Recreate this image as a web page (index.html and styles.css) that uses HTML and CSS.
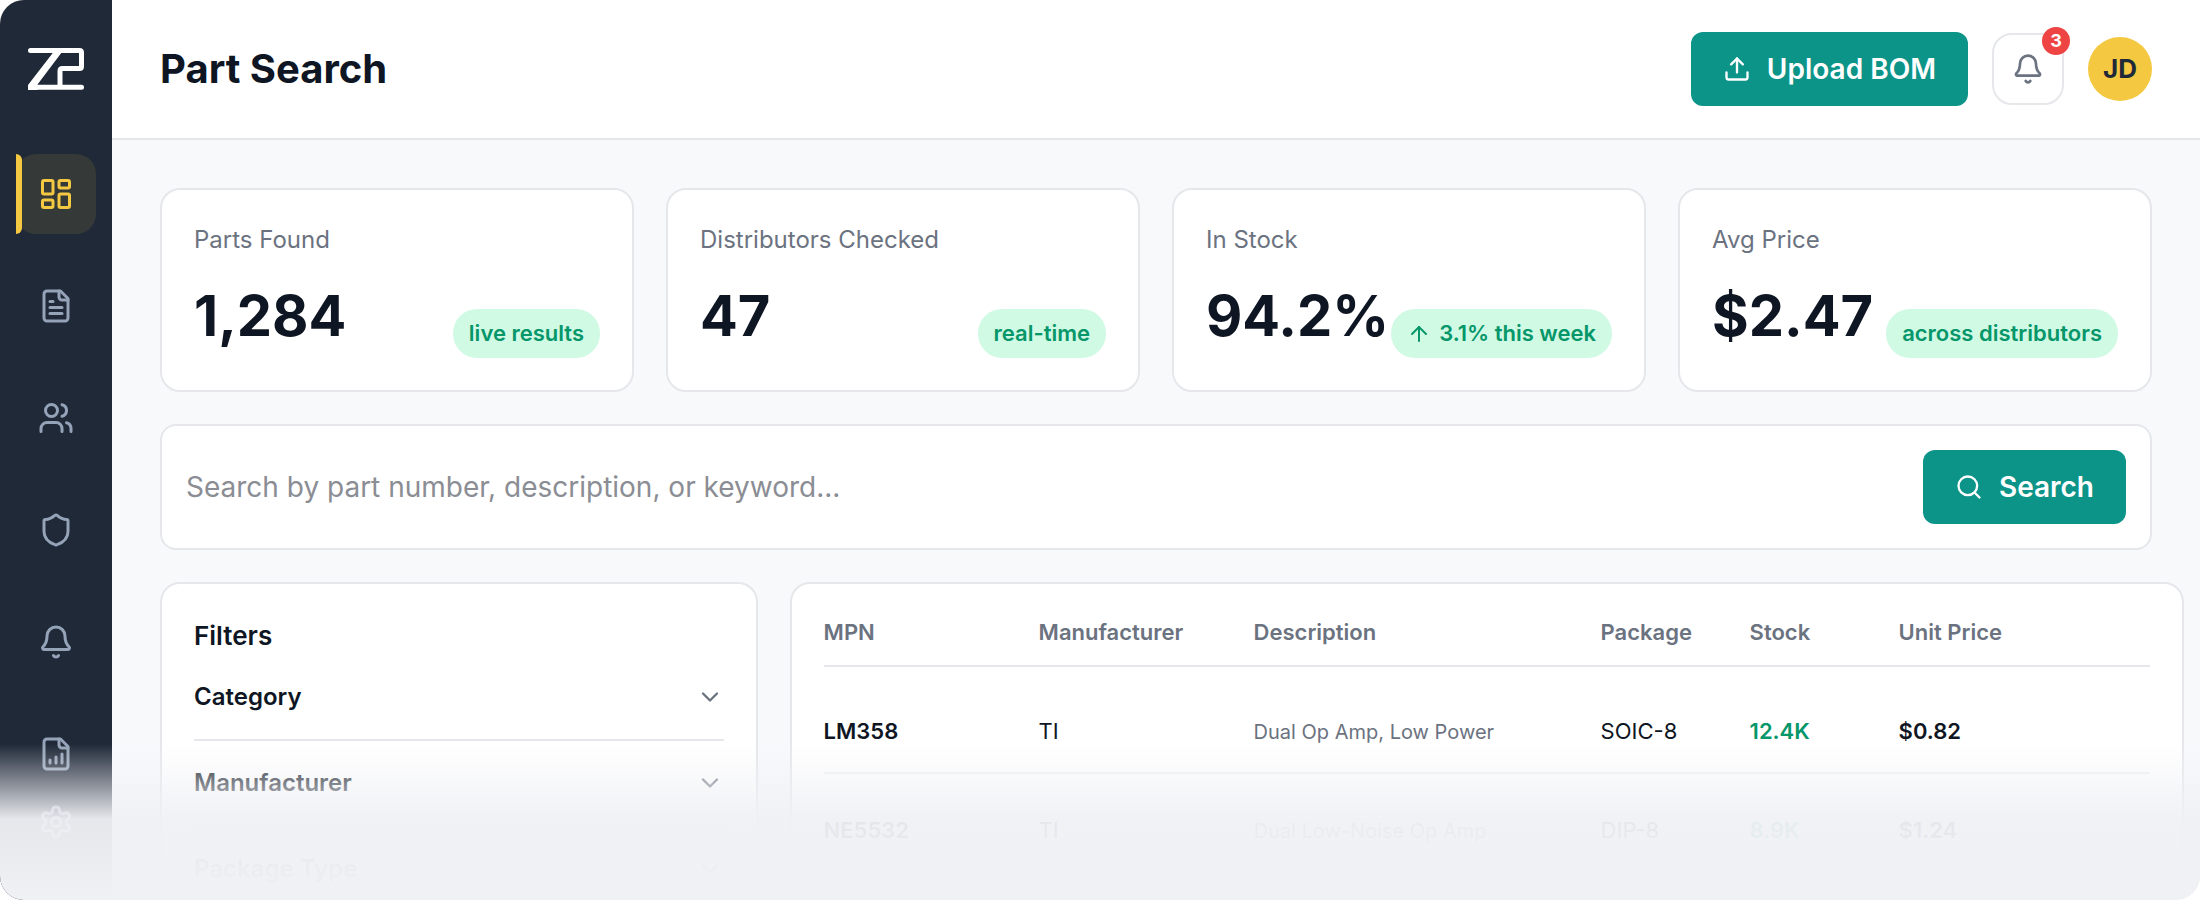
FILE: index.html
```html
<!DOCTYPE html>
<html lang="en">
<head>
  <meta charset="UTF-8">
  <meta name="viewport" content="width=device-width, initial-scale=1.0">
  <title>Part Search</title>
  <link rel="stylesheet" href="styles.css">
</head>
<body>
  <div class="app">
    <aside class="sidebar">
      <a href="#" class="logo" aria-label="Home">
        <svg width="56" height="42" viewBox="0 0 56 42" fill="none" stroke="#fff" stroke-width="5" stroke-linecap="round">
          <path d="M2.5 2.5H51.5Q53.5 2.5 53.5 4.5V18.5Q53.5 20.5 51.5 20.5H34.5Q32 20.5 32 23V38"/>
          <path d="M8 39.2H53.5"/>
          <path d="M25.5 4H34L9.5 36.5V42H0V37Z" fill="#fff" stroke="none"/>
        </svg>
      </a>
      <nav class="nav">
        <a href="#" class="nav-item active" aria-label="Dashboard">
          <svg class="icon" viewBox="0 0 24 24"><rect width="7" height="9" x="3" y="3" rx="1"/><rect width="7" height="5" x="14" y="3" rx="1"/><rect width="7" height="9" x="14" y="12" rx="1"/><rect width="7" height="5" x="3" y="16" rx="1"/></svg>
        </a>
        <a href="#" class="nav-item" aria-label="Documents">
          <svg class="icon" viewBox="0 0 24 24"><path d="M15 2H6a2 2 0 0 0-2 2v16a2 2 0 0 0 2 2h12a2 2 0 0 0 2-2V7Z"/><path d="M14 2v4a2 2 0 0 0 2 2h4"/><path d="M10 9H8"/><path d="M16 13H8"/><path d="M16 17H8"/></svg>
        </a>
        <a href="#" class="nav-item" aria-label="Suppliers">
          <svg class="icon" viewBox="0 0 24 24"><path d="M16 21v-2a4 4 0 0 0-4-4H6a4 4 0 0 0-4 4v2"/><circle cx="9" cy="7" r="4"/><path d="M22 21v-2a4 4 0 0 0-3-3.87"/><path d="M16 3.13a4 4 0 0 1 0 7.75"/></svg>
        </a>
        <a href="#" class="nav-item" aria-label="Compliance">
          <svg class="icon" viewBox="0 0 24 24"><path d="M20 13c0 5-3.5 7.5-7.66 8.95a1 1 0 0 1-.67-.01C7.5 20.5 4 18 4 13V6a1 1 0 0 1 1-1c2 0 4.5-1.2 6.24-2.72a1.17 1.17 0 0 1 1.52 0C14.51 3.81 17 5 19 5a1 1 0 0 1 1 1z"/></svg>
        </a>
        <a href="#" class="nav-item" aria-label="Alerts">
          <svg class="icon" viewBox="0 0 24 24"><path d="M10.268 21a2 2 0 0 0 3.464 0"/><path d="M3.262 15.326A1 1 0 0 0 4 17h16a1 1 0 0 0 .74-1.673C19.41 13.956 18 12.499 18 8A6 6 0 0 0 6 8c0 4.499-1.411 5.956-2.738 7.326"/></svg>
        </a>
        <a href="#" class="nav-item" aria-label="Reports">
          <svg class="icon" viewBox="0 0 24 24"><path d="M15 2H6a2 2 0 0 0-2 2v16a2 2 0 0 0 2 2h12a2 2 0 0 0 2-2V7Z"/><path d="M14 2v4a2 2 0 0 0 2 2h4"/><path d="M8 18v-2"/><path d="M12 18v-4"/><path d="M16 18v-6"/></svg>
        </a>
      </nav>
      <a href="#" class="nav-item" aria-label="Settings">
        <svg class="icon" viewBox="0 0 24 24"><path d="M12.22 2h-.44a2 2 0 0 0-2 2v.18a2 2 0 0 1-1 1.73l-.43.25a2 2 0 0 1-2 0l-.15-.08a2 2 0 0 0-2.73.73l-.22.38a2 2 0 0 0 .73 2.73l.15.1a2 2 0 0 1 1 1.72v.51a2 2 0 0 1-1 1.74l-.15.09a2 2 0 0 0-.73 2.73l.22.38a2 2 0 0 0 2.73.73l.15-.08a2 2 0 0 1 2 0l.43.25a2 2 0 0 1 1 1.73V20a2 2 0 0 0 2 2h.44a2 2 0 0 0 2-2v-.18a2 2 0 0 1 1-1.73l.43-.25a2 2 0 0 1 2 0l.15.08a2 2 0 0 0 2.73-.73l.22-.39a2 2 0 0 0-.73-2.73l-.15-.08a2 2 0 0 1-1-1.74v-.5a2 2 0 0 1 1-1.74l.15-.09a2 2 0 0 0 .73-2.73l-.22-.38a2 2 0 0 0-2.73-.73l-.15.08a2 2 0 0 1-2 0l-.43-.25a2 2 0 0 1-1-1.73V4a2 2 0 0 0-2-2z"/><circle cx="12" cy="12" r="3"/></svg>
      </a>
    </aside>

    <div class="main">
      <header class="header">
        <h1>Part Search</h1>
        <div class="header-actions">
          <button type="button" class="btn">
            <svg class="icon btn-icon" viewBox="0 0 24 24"><path d="M12 3v12"/><path d="m17 8-5-5-5 5"/><path d="M3 15v4a2 2 0 0 0 2 2h14a2 2 0 0 0 2-2v-4"/></svg>
            Upload BOM
          </button>
          <button type="button" class="bell-btn" aria-label="Notifications">
            <svg class="icon" viewBox="0 0 24 24"><path d="M10.268 21a2 2 0 0 0 3.464 0"/><path d="M3.262 15.326A1 1 0 0 0 4 17h16a1 1 0 0 0 .74-1.673C19.41 13.956 18 12.499 18 8A6 6 0 0 0 6 8c0 4.499-1.411 5.956-2.738 7.326"/></svg>
            <span class="badge">3</span>
          </button>
          <div class="avatar">JD</div>
        </div>
      </header>

      <main class="content">
        <section class="stats">
          <div class="card">
            <div class="stat-label">Parts Found</div>
            <div class="stat-row">
              <span class="stat-value">1,284</span>
              <span class="pill">live results</span>
            </div>
          </div>
          <div class="card">
            <div class="stat-label">Distributors Checked</div>
            <div class="stat-row">
              <span class="stat-value">47</span>
              <span class="pill">real-time</span>
            </div>
          </div>
          <div class="card">
            <div class="stat-label">In Stock</div>
            <div class="stat-row">
              <span class="stat-value">94.2%</span>
              <span class="pill"><svg class="icon" viewBox="0 0 24 24"><path d="m5 12 7-7 7 7"/><path d="M12 19V5"/></svg>3.1% this week</span>
            </div>
          </div>
          <div class="card">
            <div class="stat-label">Avg Price</div>
            <div class="stat-row">
              <span class="stat-value">$2.47</span>
              <span class="pill">across distributors</span>
            </div>
          </div>
        </section>

        <form class="search">
          <input type="text" aria-label="Search parts" placeholder="Search by part number, description, or keyword...">
          <button type="button" class="btn">
            <svg class="icon btn-icon" viewBox="0 0 24 24"><circle cx="11" cy="11" r="8"/><path d="m21 21-4.3-4.3"/></svg>
            Search
          </button>
        </form>

        <div class="results">
          <section class="card filters">
            <h2>Filters</h2>
            <button type="button" class="filter">Category <svg class="icon" viewBox="0 0 24 24"><path d="m6 9 6 6 6-6"/></svg></button>
            <button type="button" class="filter">Manufacturer <svg class="icon" viewBox="0 0 24 24"><path d="m6 9 6 6 6-6"/></svg></button>
            <button type="button" class="filter">Package Type <svg class="icon" viewBox="0 0 24 24"><path d="m6 9 6 6 6-6"/></svg></button>
          </section>
          <section class="card parts">
            <table>
              <colgroup>
                <col class="col-mpn">
                <col class="col-mfr">
                <col class="col-desc">
                <col class="col-pkg">
                <col class="col-stock">
                <col>
              </colgroup>
              <thead>
                <tr><th>MPN</th><th>Manufacturer</th><th>Description</th><th>Package</th><th>Stock</th><th>Unit Price</th></tr>
              </thead>
              <tbody>
                <tr><td class="strong">LM358</td><td>TI</td><td class="desc">Dual Op Amp, Low Power</td><td>SOIC-8</td><td class="stock">12.4K</td><td class="strong">$0.82</td></tr>
                <tr><td class="strong">NE5532</td><td>TI</td><td class="desc">Dual Low-Noise Op Amp</td><td>DIP-8</td><td class="stock">8.9K</td><td class="strong">$1.24</td></tr>
              </tbody>
            </table>
          </section>
        </div>
      </main>
    </div>
    <div class="fade"></div>
  </div>
</body>
</html>
```

FILE: styles.css
```css
* {
  box-sizing: border-box;
}

body {
  margin: 0;
  background-color: #fff;
  font-family: Inter, sans-serif;
  font-size: 22px;
  line-height: 1.5;
  color: #0f1623;
}

h1, h2 {
  margin: 0;
}

a {
  text-decoration: none;
}

button, input {
  font-family: inherit;
  line-height: inherit;
}

button {
  cursor: pointer;
}

.icon {
  display: block;
  flex-shrink: 0;
  width: 36px;
  height: 36px;
  fill: none;
  stroke: currentColor;
  stroke-width: 2;
  stroke-linecap: round;
  stroke-linejoin: round;
}

.app {
  position: relative;
  display: flex;
  height: 100vh;
  overflow: hidden;
  border-radius: 24px;
  background-color: #f8f9fb;
}

/* sidebar */
.sidebar {
  display: flex;
  flex-direction: column;
  align-items: center;
  flex-shrink: 0;
  width: 112px;
  padding: 48px 0 38px;
  background-color: #202938;
}

.logo {
  height: 42px;
  margin-bottom: 64px;
}

.logo svg {
  display: block;
}

.nav {
  display: flex;
  flex-direction: column;
  flex: 1;
  gap: 32px;
  min-height: 0;
}

.nav-item {
  position: relative;
  display: flex;
  align-items: center;
  justify-content: center;
  flex-shrink: 0;
  width: 80px;
  height: 80px;
  border-radius: 20px;
  color: #94a3b8;
}

.nav-item.active {
  background-color: #353a38;
  color: #f5c842;
}

.nav-item.active::before {
  content: "";
  position: absolute;
  left: 0;
  top: 0;
  bottom: 0;
  width: 6px;
  border-radius: 0 6px 6px 0;
  background-color: #f5c842;
}

/* header */
.main {
  flex: 1;
  min-width: 0;
}

.header {
  display: flex;
  align-items: center;
  justify-content: space-between;
  padding: 32px 48px;
  border-bottom: 2px solid #e5e7eb;
  background-color: #fff;
}

h1 {
  font-size: 40px;
  font-weight: 700;
}

.header-actions {
  display: flex;
  align-items: center;
  gap: 24px;
}

.btn {
  display: flex;
  align-items: center;
  gap: 16px;
  padding: 16px 32px;
  border: none;
  border-radius: 12px;
  background-color: #0d9488;
  color: #fff;
  font-size: 28px;
  font-weight: 600;
}

.btn-icon {
  width: 28px;
  height: 28px;
}

.bell-btn {
  position: relative;
  display: flex;
  align-items: center;
  justify-content: center;
  width: 72px;
  height: 72px;
  padding: 0;
  border: 2px solid #e5e7eb;
  border-radius: 20px;
  background-color: #fff;
  color: #6b7280;
}

.bell-btn .icon {
  width: 32px;
  height: 32px;
}

.badge {
  position: absolute;
  top: -8px;
  right: -8px;
  width: 28px;
  height: 28px;
  border-radius: 50%;
  background-color: #ef4444;
  color: #fff;
  font-size: 18px;
  font-weight: 700;
  line-height: 28px;
  text-align: center;
}

.avatar {
  width: 64px;
  height: 64px;
  border-radius: 50%;
  background-color: #f5c842;
  color: #202938;
  font-size: 26px;
  font-weight: 700;
  line-height: 64px;
  text-align: center;
}

/* content */
.content {
  display: flex;
  flex-direction: column;
  gap: 32px;
  padding: 48px;
}

.card {
  padding: 32px;
  border: 2px solid #e5e7eb;
  border-radius: 20px;
  background-color: #fff;
}

.stats {
  display: grid;
  grid-template-columns: repeat(4, minmax(0, 1fr));
  gap: 32px;
}

.stat-label {
  margin-bottom: 16px;
  color: #6b7280;
  font-size: 24px;
}

.stat-row {
  display: flex;
  align-items: flex-end;
  justify-content: space-between;
}

.stat-value {
  font-size: 56px;
  font-weight: 700;
}

.pill {
  display: flex;
  align-items: center;
  gap: 8px;
  padding: 8px 16px;
  border-radius: 24px;
  background-color: #d1fae5;
  color: #059669;
  font-weight: 600;
  white-space: nowrap;
}

.pill .icon {
  width: 24px;
  height: 24px;
}

.search {
  display: flex;
  align-items: center;
  gap: 24px;
  padding: 24px;
  border: 2px solid #e5e7eb;
  border-radius: 16px;
  background-color: #fff;
}

.search input {
  flex: 1;
  min-width: 0;
  padding: 0;
  border: none;
  outline: none;
  background: none;
  color: #0f1623;
  font-size: 28px;
}

.search input::placeholder {
  color: #8b8d94;
}

/* the table card is wider than its column and runs past the padding */
.results {
  display: grid;
  grid-template-columns: 30% 70%;
  gap: 32px;
}

h2 {
  margin-bottom: 24px;
  font-size: 26px;
  font-weight: 600;
}

.filter {
  display: flex;
  align-items: center;
  justify-content: space-between;
  width: 100%;
  padding: 0 0 24px;
  margin-bottom: 24px;
  border: none;
  border-bottom: 2px solid #e5e7eb;
  background: none;
  color: #0f1623;
  font-size: 24px;
  font-weight: 600;
}

.filter .icon {
  width: 28px;
  height: 28px;
  color: #6b7280;
}

table {
  width: 100%;
  table-layout: fixed;
  border-collapse: collapse;
  text-align: left;
}

.col-mpn, .col-mfr {
  width: 215px;
}

.col-desc {
  width: 347px;
}

.col-pkg, .col-stock {
  width: 149px;
}

th {
  padding: 0 0 16px;
  border-bottom: 2px solid #e5e7eb;
  color: #6b7280;
  font-weight: 600;
}

td {
  padding: 40px 0 24px;
  border-bottom: 2px solid #f0f1f5;
}

tbody tr:first-child td {
  padding-top: 48px;
}

.strong {
  font-weight: 600;
}

.desc {
  color: #6b7280;
  font-size: 20px;
}

.stock {
  color: #059669;
  font-weight: 600;
}

/* fades the lower part of the preview out */
.fade {
  position: absolute;
  left: 0;
  right: 0;
  bottom: 0;
  height: 156px;
  background: linear-gradient(to bottom, rgba(240, 241, 245, 0), rgba(240, 241, 245, 0.95) 48%, #f0f1f5);
  pointer-events: none;
}
```
